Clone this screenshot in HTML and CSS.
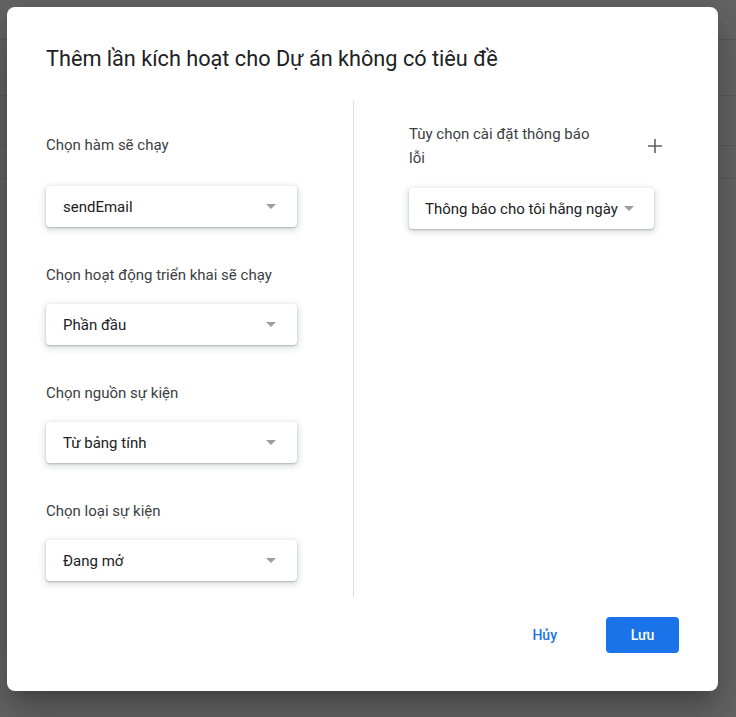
FILE: index.html
```html
<!DOCTYPE html>
<html lang="vi">
<head>
<meta charset="utf-8">
<title>Thêm lần kích hoạt</title>
<link rel="stylesheet" href="styles.css">
</head>
<body>
<div class="dialog">
  <h1 class="title">Thêm lần kích hoạt cho Dự án không có tiêu đề</h1>
  <div class="content">
    <div class="col col-left">
      <div class="group first">
        <div class="label">Chọn hàm sẽ chạy</div>
        <div class="select"><span>sendEmail</span><i class="arrow"></i></div>
      </div>
      <div class="group">
        <div class="label">Chọn hoạt động triển khai sẽ chạy</div>
        <div class="select"><span>Phần đầu</span><i class="arrow"></i></div>
      </div>
      <div class="group">
        <div class="label">Chọn nguồn sự kiện</div>
        <div class="select"><span>Từ bảng tính</span><i class="arrow"></i></div>
      </div>
      <div class="group">
        <div class="label">Chọn loại sự kiện</div>
        <div class="select"><span>Đang mở</span><i class="arrow"></i></div>
      </div>
    </div>
    <div class="divider"></div>
    <div class="col col-right">
      <div class="notify-head">
        <div class="label notify-label">Tùy chọn cài đặt thông báo lỗi</div>
        <svg class="plus" width="24" height="24" viewBox="0 0 24 24"><path d="M12 5v14M5 12h14" stroke="#5f6368" stroke-width="1.6" fill="none"/></svg>
      </div>
      <div class="select select-right"><span>Thông báo cho tôi hằng ngày</span><i class="arrow"></i></div>
    </div>
  </div>
  <div class="footer">
    <button class="btn btn-text">Hủy</button>
    <button class="btn btn-primary">Lưu</button>
  </div>
</div>
</body>
</html>
```
FILE: styles.css
```css
html, body {
  margin: 0;
  padding: 0;
  height: 100%;
}
body {
  background-color: #656565;
  background-image:
    linear-gradient(#5a5a5a, #5a5a5a),
    linear-gradient(#5a5a5a, #5a5a5a),
    linear-gradient(#5a5a5a, #5a5a5a),
    linear-gradient(#5a5a5a, #5a5a5a);
  background-repeat: no-repeat;
  background-size: 100% 1px;
  background-position: 0 39px, 0 95px, 0 145px, 0 178px;
  font-family: Roboto, "Liberation Sans", Arial, sans-serif;
  overflow: hidden;
  padding: 7px 0 0 7px;
  box-sizing: border-box;
}
.dialog {
  width: 711px;
  background: #fff;
  border-radius: 8px;
  box-shadow: 0 24px 38px 3px rgba(0,0,0,0.14), 0 9px 46px 8px rgba(0,0,0,0.12), 0 11px 15px -7px rgba(0,0,0,0.2);
  padding: 38px 39px 38px 39px;
  box-sizing: border-box;
  display: flex;
  flex-direction: column;
}
.title {
  margin: 0;
  font-size: 21.7px;
  line-height: 28px;
  font-weight: 400;
  color: #202124;
  letter-spacing: 0;
}
.content {
  margin-top: 28px;
  display: flex;
  align-items: stretch;
}
.col-left {
  width: 251px;
  padding: 32px 0 16px 0;
  margin-right: 56px;
}
.group {
  margin-top: 36px;
}
.group.first {
  margin-top: 0;
}
.label {
  font-size: 15px;
  line-height: 24px;
  color: #3c4043;
}
.group .select {
  margin-top: 17px;
}
.group.first .select {
  margin-top: 29px;
}
.select {
  height: 41px;
  border-radius: 4px;
  background: #fff;
  box-shadow: 0 1px 2px rgba(60,64,67,0.3), 0 2px 6px 2px rgba(60,64,67,0.15);
  display: flex;
  align-items: center;
  justify-content: space-between;
  padding: 0 21px 0 17px;
  box-sizing: border-box;
  font-size: 15px;
  color: #202124;
  white-space: nowrap;
}
.arrow {
  width: 0;
  height: 0;
  flex: none;
  border-left: 5px solid transparent;
  border-right: 5px solid transparent;
  border-top: 5px solid #9e9e9e;
}
.divider {
  width: 1px;
  background: #dadce0;
}
.col-right {
  margin-left: 55px;
  padding-top: 21px;
  width: 258px;
}
.notify-head {
  display: flex;
  align-items: center;
  justify-content: space-between;
}
.notify-label {
  width: 195px;
}
.plus {
  display: block;
}
.select-right {
  width: 245px;
  margin-top: 18px;
  padding: 0 20px 0 16px;
}
.footer {
  margin-top: 20px;
  display: flex;
  justify-content: flex-end;
  gap: 25px;
}
.btn {
  height: 36px;
  border: none;
  border-radius: 4px;
  font-family: Roboto, "Liberation Sans", Arial, sans-serif;
  font-size: 14px;
  font-weight: 500;
  padding: 0 24px;
  cursor: pointer;
}
.btn-text {
  background: transparent;
  color: #1a73e8;
}
.btn-primary {
  background: #1a73e8;
  color: #fff;
  width: 73px;
  padding: 0;
}
```
